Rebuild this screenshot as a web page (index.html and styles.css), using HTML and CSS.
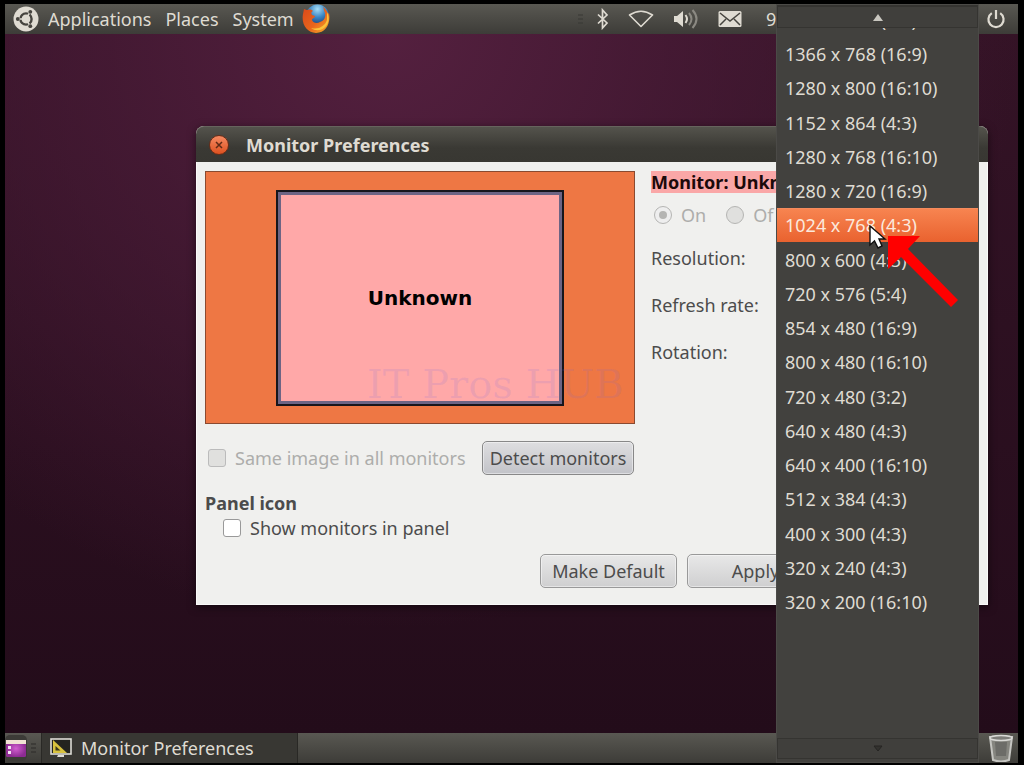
FILE: index.html
```html
<!DOCTYPE html>
<html lang="en">
<head>
<meta charset="utf-8">
<title>Monitor Preferences</title>
<link rel="stylesheet" href="styles.css">
</head>
<body>
<div class="screen">
  <header class="panel panel-top">
    <nav class="menus">
      <svg class="ubuntu" viewBox="0 0 26 26" width="26" height="26" aria-hidden="true">
        <circle cx="13" cy="13" r="12.5" fill="#dfdbd2"/>
        <circle cx="13" cy="13" r="5.6" fill="none" stroke="#46443f" stroke-width="2.4"/>
        <g stroke="#dfdbd2" stroke-width="1.6"><path d="M13 13H4M13 13l5-8.6M13 13l5 8.6"/></g>
        <circle cx="13" cy="13" r="4" fill="#dfdbd2"/>
        <g fill="#46443f"><circle cx="4.8" cy="13" r="1.9"/><circle cx="17.3" cy="5.8" r="1.9"/><circle cx="17.3" cy="20.2" r="1.9"/></g>
      </svg>
      <a href="#">Applications</a>
      <a href="#">Places</a>
      <a href="#">System</a>
      <svg class="firefox" viewBox="0 0 30 30" width="30" height="30" aria-hidden="true">
        <defs>
          <radialGradient id="globe" cx=".5" cy=".2" r=".8"><stop offset="0" stop-color="#a5dcf5"/><stop offset=".45" stop-color="#3b86c4"/><stop offset="1" stop-color="#12285f"/></radialGradient>
          <linearGradient id="fox" x1="0" y1="0" x2="1" y2="1"><stop offset="0" stop-color="#d9481a"/><stop offset=".55" stop-color="#e8641c"/><stop offset="1" stop-color="#f8b32c"/></linearGradient>
        </defs>
        <circle cx="15.500" cy="12" r="11.500" fill="url(#globe)"/>
        <path d="M2 5c2 1 3 1 4 1 2-1 4 0 5 1-2 1-2 2-1 4l3 1c0 2-3 2-3 4 1 3 5 4 8 2 4-1 6-5 5-9-1-2-1-4-2-6 3 2 4 4 5 7l1-1c2 10-3 20-13 20C5 29-1 20 1 10z" fill="url(#fox)"/>
        <path d="M25 8c3 6 2 12-3 16-4 3-9 3-13 0 8 2 14-2 16-8z" fill="#fac43b"/>
      </svg>
    </nav>
    <div class="tray">
      <svg viewBox="0 0 6 12" width="6" height="12" aria-hidden="true"><path d="M0 2h5M0 6h5M0 10h5" stroke="#393834"/></svg>
      <svg viewBox="0 0 14 22" width="14" height="22" aria-hidden="true"><path d="M2 6.500l9 8.500-4.500 5V2L11 7l-9 8.500" fill="none" stroke="#dfdbd2" stroke-width="1.700"/></svg>
      <svg viewBox="0 0 26 20" width="26" height="20" aria-hidden="true"><path d="M1.500 6Q13-1.500 24.500 6L13 17.500z" fill="none" stroke="#dfdbd2" stroke-width="1.600" stroke-linejoin="round"/></svg>
      <svg viewBox="0 0 28 22" width="28" height="22" aria-hidden="true"><path d="M2 8h3l6-5v16l-6-5H2z" fill="#dfdbd2"/><path d="M13.500 7q3 4 0 8" fill="none" stroke="#dfdbd2" stroke-width="2"/><path d="M17 5q5 6 0 12M20.500 2q8 9 0 18" fill="none" stroke="#8b8982" stroke-width="2"/></svg>
      <svg viewBox="0 0 24 18" width="24" height="18" aria-hidden="true"><rect x=".5" y="1" width="23" height="16" rx="1.500" fill="#dfdbd2"/><path d="M2 3l10 8 10-8M2 15l6-6M22 15l-6-6" fill="none" stroke="#46443f" stroke-width="1.500"/></svg>
      <span class="clock">9</span>
      <svg class="power" viewBox="0 0 20 20" width="20" height="20" aria-hidden="true"><path d="M5.800 4.200a7.600 7.600 0 1 0 8.400 0M10 1v9" fill="none" stroke="#dfdbd2" stroke-width="2.200"/></svg>
    </div>
  </header>

  <main class="desktop">
    <section class="window">
      <div class="titlebar">
        <button class="close" type="button" aria-label="Close"><svg viewBox="0 0 8 8" width="8" height="8"><path d="M1 1l6 6M7 1l-6 6" stroke="#5f2a16" stroke-width="1.500"/></svg></button>
        <h1>Monitor Preferences</h1>
      </div>
      <div class="content">
        <div class="columns">
          <div class="left">
            <div class="layout-area"><div class="monitor">Unknown</div></div>
            <div class="same-row">
              <label class="check disabled"><input type="checkbox" disabled>Same image in all monitors</label>
              <button class="btn detect" type="button">Detect monitors</button>
            </div>
            <h2>Panel icon</h2>
            <label class="check indent"><input type="checkbox">Show monitors in panel</label>
          </div>
          <div class="right">
            <h2 class="name">Monitor: Unkn</h2>
            <div class="radios">
              <label class="disabled"><input type="radio" name="power" checked disabled>On</label>
              <label class="disabled"><input type="radio" name="power" disabled>Of</label>
            </div>
            <p class="field">Resolution:</p>
            <p class="field">Refresh rate:</p>
            <p class="field">Rotation:</p>
          </div>
        </div>
        <div class="actions">
          <button class="btn" type="button">Make Default</button>
          <button class="btn" type="button">Apply</button>
        </div>
      </div>
    </section>
    <div class="watermark">IT Pros HUB</div>
  </main>

  <footer class="panel panel-bottom">
    <svg class="show" viewBox="0 0 22 26" width="22" height="26" aria-hidden="true">
      <defs><radialGradient id="purple"><stop offset="0" stop-color="#d25fd0"/><stop offset="1" stop-color="#8d2b93"/></radialGradient></defs>
      <rect x="0" y="0" width="22" height="26" rx="5" fill="#3c3b37"/>
      <rect x="1" y="5" width="20" height="17" rx="1.500" fill="url(#purple)"/><path d="M1 5h20v4H1z" fill="#f1e2d4"/><path d="M3 11h3v3H3zM3 16h3v3H3z" fill="#f3e3f3"/>
    </svg>
    <svg viewBox="0 0 6 12" width="6" height="12" aria-hidden="true"><path d="M0 2h5M0 6h5M0 10h5" stroke="#2c2b28"/></svg>
    <button class="task" type="button">
      <svg viewBox="0 0 22 20" width="22" height="20" aria-hidden="true"><rect x="1" y="1" width="20" height="15" fill="#24241f" stroke="#dedcd6" stroke-width="1.600"/><path d="M8 17h6v2H7z" fill="#dedcd6"/><path d="M3 2l14 13H3z" fill="#d8c23e"/><path d="M5.500 8v4.500h5z" fill="#3a371c"/></svg>
      Monitor Preferences
    </button>
    <svg class="trash" viewBox="0 0 26 28" width="26" height="28" aria-hidden="true"><path d="M2 3h22l-3 23q-8 3-16 0z" fill="#85857f" stroke="#c5c5c1" stroke-width="2"/><path d="M7 8h12l-1 14H8z" fill="#6c6c68"/><ellipse cx="13" cy="4" rx="11" ry="2.500" fill="#7d7d79" stroke="#d9d9d6" stroke-width="1.500"/></svg>
  </footer>

  <div class="dropdown">
    <div class="scroll up"><svg viewBox="0 0 10 7" width="10" height="7" aria-hidden="true"><path d="M5 0l5 7H0z" fill="#c9c7c0"/></svg></div>
    <p class="previous">1280 x 960 (4:3)</p>
    <ul class="options">
      <li>1366 x 768 (16:9)</li>
      <li>1280 x 800 (16:10)</li>
      <li>1152 x 864 (4:3)</li>
      <li>1280 x 768 (16:10)</li>
      <li>1280 x 720 (16:9)</li>
      <li class="selected">1024 x 768 (4:3)</li>
      <li>800 x 600 (4:3)</li>
      <li>720 x 576 (5:4)</li>
      <li>854 x 480 (16:9)</li>
      <li>800 x 480 (16:10)</li>
      <li>720 x 480 (3:2)</li>
      <li>640 x 480 (4:3)</li>
      <li>640 x 400 (16:10)</li>
      <li>512 x 384 (4:3)</li>
      <li>400 x 300 (4:3)</li>
      <li>320 x 240 (4:3)</li>
      <li>320 x 200 (16:10)</li>
    </ul>
    <div class="scroll down"><svg viewBox="0 0 10 7" width="10" height="7" aria-hidden="true"><path d="M1 1h8L5 6z" fill="#33322f" stroke="#262523"/></svg></div>
    <svg class="pointer" viewBox="0 0 90 82" width="90" height="82" aria-hidden="true">
      <path d="M19 11h32L39 24l50 51-7 7-50-50-13 12z" fill="#f00"/>
      <path d="M1 1v19l4.500-4L9 23l4-2-3-7h6z" fill="#fff" stroke="#111" stroke-width="1.400"/>
    </svg>
  </div>
</div>
</body>
</html>
```
FILE: styles.css
```css
* { box-sizing: border-box; }

body {
  margin: 0;
  background: #000;
  color: #4c4c4c;
  font: 18px/24px "Noto Sans", "Open Sans", sans-serif;
}

h1, h2, p, ul { margin: 0; padding: 0; }
h1, h2 { font-size: 18px; line-height: 24px; }
button, input { font: inherit; margin: 0; }
svg { display: block; flex: none; }

.screen {
  position: relative;
  display: flex;
  flex-direction: column;
  height: 100vh;
  padding: 4px 6px 2px 5px;
  overflow: hidden;
}

.panel {
  display: flex;
  flex: none;
  align-items: center;
  height: 30px;
  background: linear-gradient(#595852, #3d3c38);
  color: #dfdbd2;
  white-space: nowrap;
}
.panel-top { justify-content: space-between; }
.menus { display: flex; align-items: center; gap: 14px; padding-left: 8px; }
.menus a { color: inherit; text-decoration: none; }
.ubuntu { margin-right: -5px; }
.firefox { margin-left: -6px; }
.tray { display: flex; align-items: center; gap: 18px; padding-right: 12px; }
.tray svg:first-child { margin-right: -6px; }
.clock { width: 208px; padding-left: 6px; }

.desktop {
  position: relative;
  flex: 1;
  background:
    radial-gradient(ellipse 62% 85% at 38% 0, #54203f 0, rgba(73, 27, 55, .75) 45%, transparent 100%),
    linear-gradient(#341326, #230c1a);
}

.window {
  position: absolute;
  left: 191px;
  top: 92px;
  width: 792px;
  border-radius: 8px 8px 0 0;
  background: #f0f0ee;
  box-shadow: 0 2px 8px rgba(0, 0, 0, .5);
}
.titlebar {
  display: flex;
  align-items: center;
  gap: 17px;
  height: 36px;
  padding-left: 13px;
  border-top: 1px solid #66645d;
  border-radius: 8px 8px 0 0;
  background: linear-gradient(#54534c, #3a3934 60%, #383732);
  color: #dfdbd2;
}
.close {
  display: grid;
  place-items: center;
  width: 20px;
  height: 20px;
  padding: 0;
  border: 1px solid #6a2d17;
  border-radius: 50%;
  background: linear-gradient(#f58a62, #dd5120);
}
.content { padding: 9px; padding-bottom: 16px; border: 1px solid #fafaf9; border-top: 0; }
.columns { display: flex; gap: 16px; white-space: nowrap; }
.left { flex: none; width: 430px; margin-left: -1px; }
.layout-area {
  display: grid;
  place-items: center;
  height: 253px;
  border: 1px solid #8a4a30;
  background: #ee7744;
}
.monitor {
  display: grid;
  place-items: center;
  width: 288px;
  height: 216px;
  border: 2px solid #17151c;
  background: #ffa8a8;
  box-shadow: inset 0 0 0 3px #6d6484;
  color: #000;
  font: bold 20px/24px "DejaVu Sans", sans-serif;
}
.same-row {
  display: flex;
  align-items: center;
  justify-content: space-between;
  margin: 17px 1px 16px 3px;
}
.check { display: flex; align-items: center; gap: 9px; }
.disabled { color: #adadab; }
.indent { margin: 1px 0 0 18px; }

input[type="checkbox"], input[type="radio"] {
  appearance: none;
  display: grid;
  place-items: center;
  width: 18px;
  height: 18px;
  border: 1px solid #999;
  border-radius: 3px;
  background: #fff;
}
input[type="checkbox"]:disabled { border-color: #bbb; background: #e0e0de; }
input[type="radio"] { border-color: #b5b5b3; border-radius: 50%; background: #e0e0de; }
input[type="radio"]:checked { background: #eee; }
input[type="radio"]:checked::before {
  content: "";
  width: 8px;
  height: 8px;
  border-radius: 50%;
  background: #b5b5b3;
}

.btn {
  width: 137px;
  height: 34px;
  padding: 0;
  border: 1px solid #999;
  border-radius: 5px;
  background: linear-gradient(#e8e8e8, #cfcfd0);
  box-shadow: inset 0 0 0 1px rgba(255, 255, 255, .45);
  color: #4c4c4c;
}
.detect { width: 152px; border-color: #888; background: linear-gradient(#dedee0, #c2c3c8); }

.right { flex: 1; }
.name { width: 128px; height: 22px; line-height: 22px; background: #faa7a7; color: #1b0a0a; }
.radios { display: flex; gap: 20px; margin: 10px 0 19px 3px; }
.radios label { display: flex; align-items: center; gap: 9px; }
.field { margin-bottom: 23px; }
.actions { display: flex; gap: 10px; padding: 14px 0 0 334px; }

.watermark {
  position: absolute;
  left: 362px;
  top: 326px;
  color: rgba(110, 100, 225, .12);
  font: 40px/48px "DejaVu Serif", serif;
  white-space: nowrap;
}

.panel-bottom { gap: 4px; }
.task {
  display: flex;
  align-items: center;
  gap: 9px;
  width: 257px;
  height: 30px;
  padding: 0 8px;
  border: 0;
  border-left: 1px solid #292825;
  border-right: 1px solid #292825;
  background: #383733;
  color: #dfdbd2;
}
.trash { margin: 0 4px 0 auto; }

.dropdown {
  position: absolute;
  top: 4px;
  bottom: 2px;
  right: 45px;
  display: flex;
  flex-direction: column;
  width: 203px;
  border: 1px solid #4b4a47;
  background: #42413e;
  color: #dfdbd2;
}
.scroll {
  display: grid;
  place-items: center;
  flex: none;
  height: 21px;
  border: 1px solid #353431;
  background: #403f3c;
}
.up { height: 23px; border-top-width: 2px; }
.down { margin-top: auto; margin-bottom: 3px; }
.previous {
  display: flex;
  flex: none;
  align-items: flex-end;
  height: 9px;
  padding-left: 8px;
  overflow: hidden;
  line-height: 34px;
}
.options {
  display: flex;
  flex: none;
  flex-direction: column;
  justify-content: space-between;
  height: 582px;
  list-style: none;
}
.options li { height: 34px; padding-left: 8px; line-height: 34px; white-space: nowrap; }
.options .selected { border-top: 1px solid #f58b5d; background: linear-gradient(#f78450, #e9622f); line-height: 32px; color: #fbe9dc; }
.pointer { position: absolute; left: 92px; top: 220px; }
```
